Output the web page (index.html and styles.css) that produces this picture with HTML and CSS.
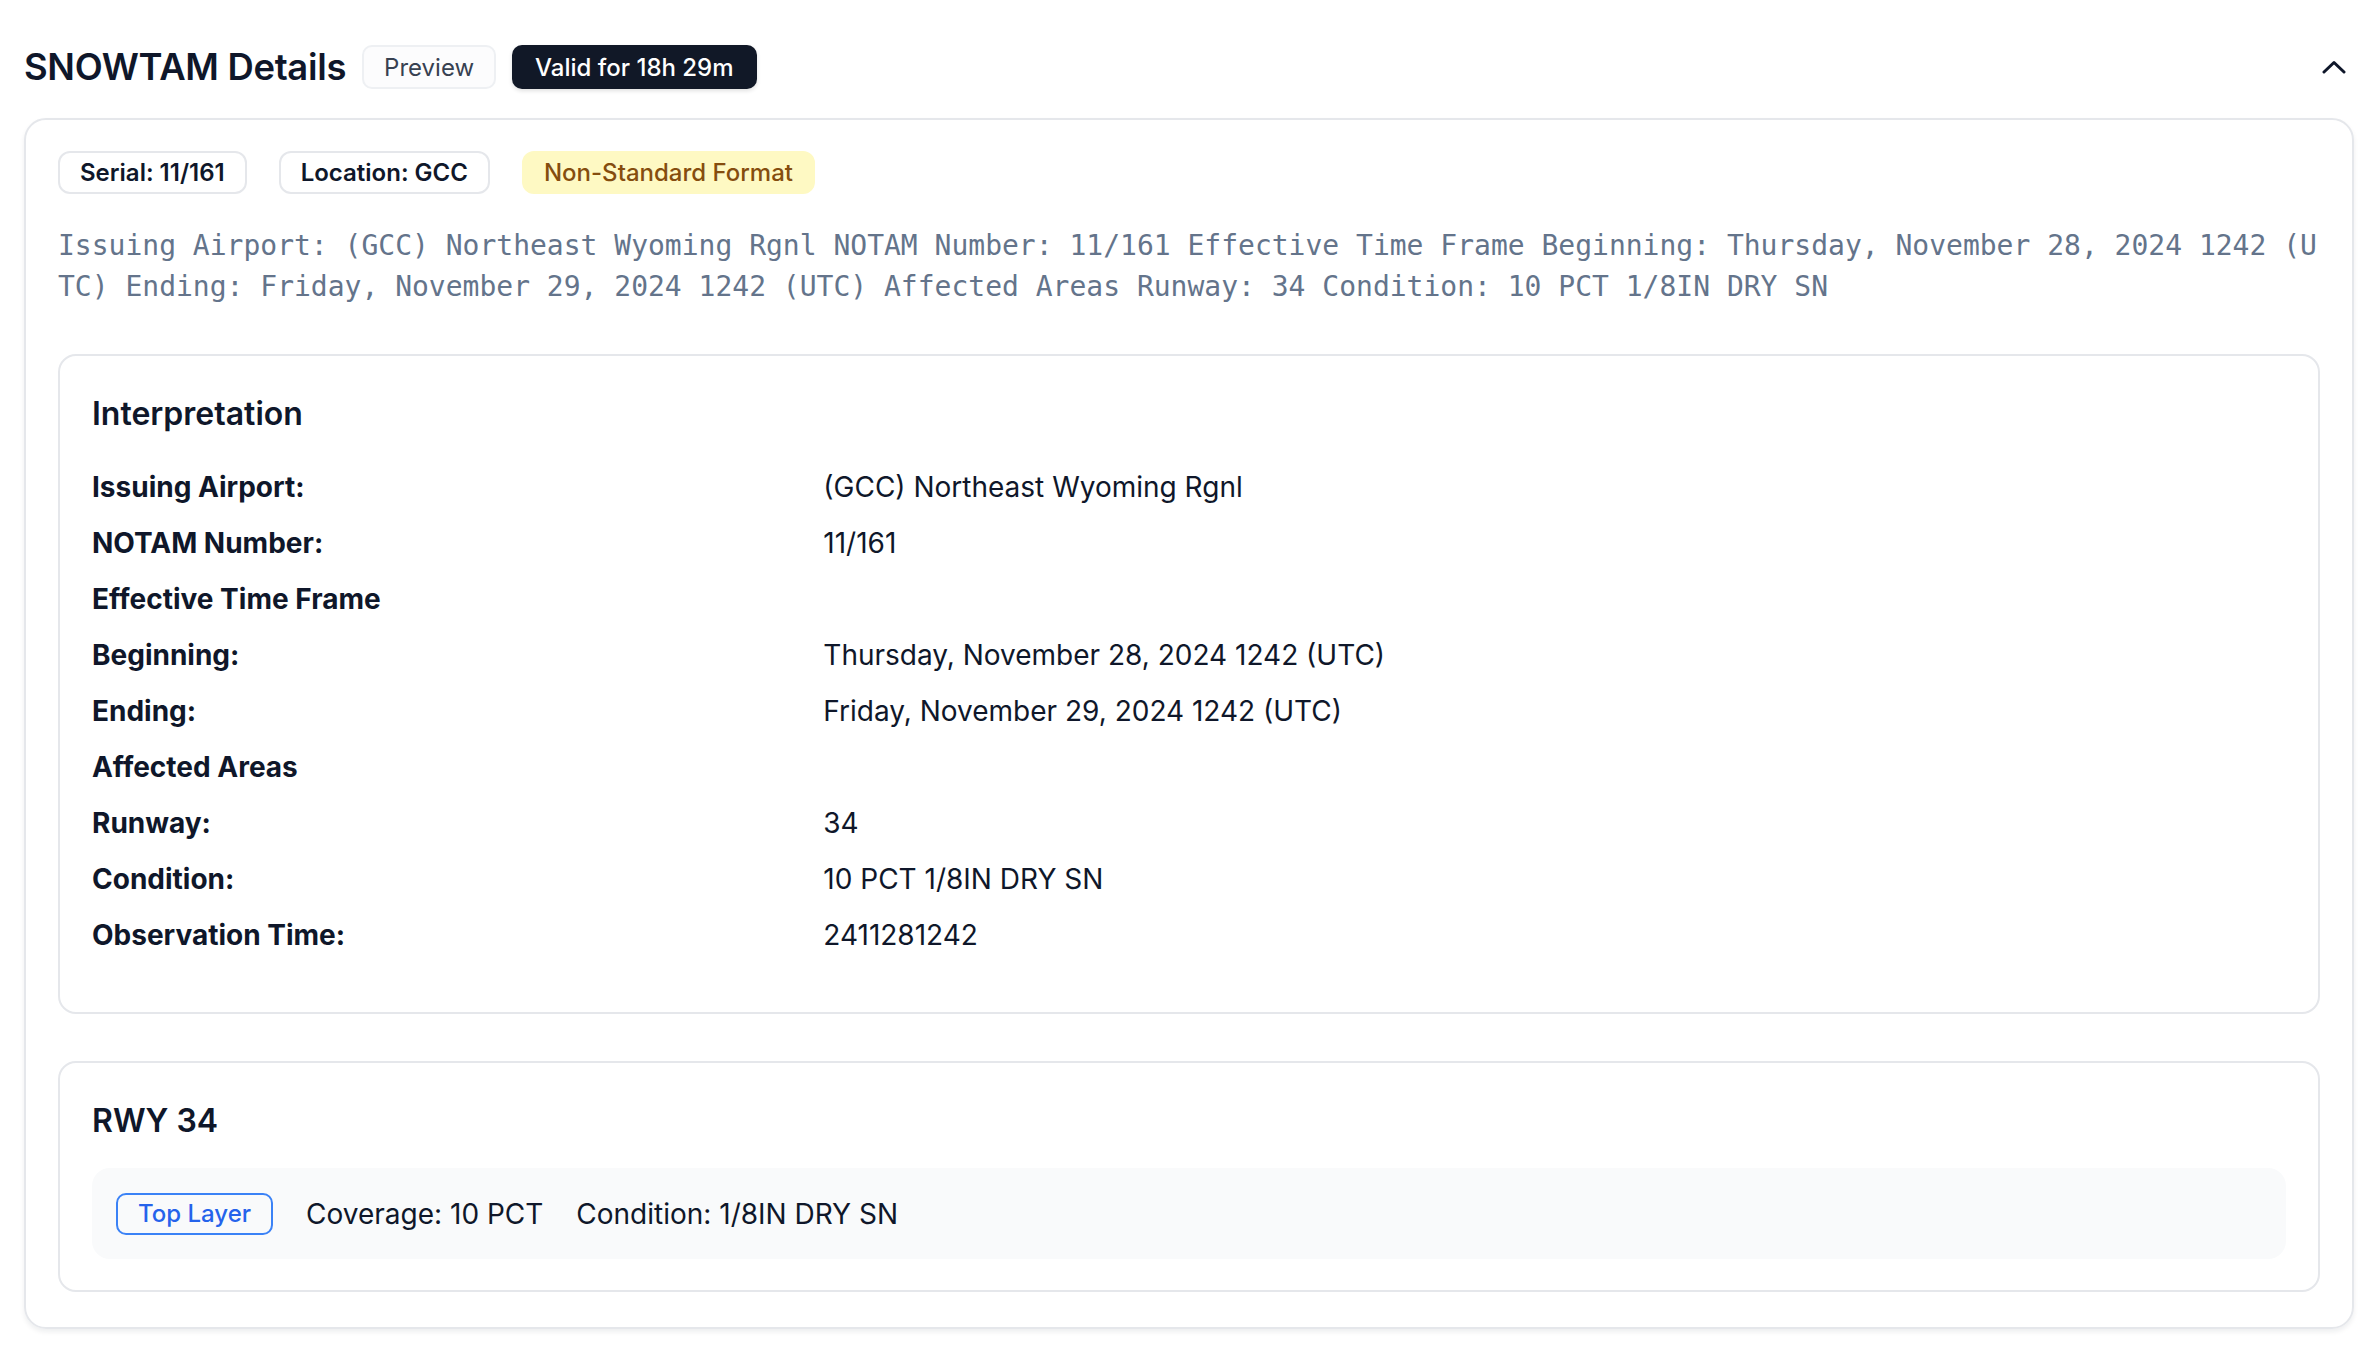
FILE: index.html
```html
<!DOCTYPE html>
<html lang="en">
<head>
<meta charset="utf-8">
<title>SNOWTAM Details</title>
<link rel="stylesheet" href="styles.css">
</head>
<body>
<div class="page">
  <header class="header">
    <div class="header-left">
      <h1 class="title">SNOWTAM Details</h1>
      <span class="pill pill-light">Preview</span>
      <span class="pill pill-dark">Valid for 18h 29m</span>
    </div>
    <button class="toggle" aria-label="Collapse">
      <svg width="24" height="14" viewBox="0 0 24 14" fill="none"><polyline points="2,12 12,2.5 22,12" stroke="#0f172a" stroke-width="3" stroke-linecap="round" stroke-linejoin="round"/></svg>
    </button>
  </header>

  <section class="card">
    <div class="tags">
      <span class="tag">Serial: 11/161</span>
      <span class="tag">Location: GCC</span>
      <span class="tag tag-warn">Non-Standard Format</span>
    </div>

    <p class="raw">Issuing Airport: (GCC) Northeast Wyoming Rgnl NOTAM Number: 11/161 Effective Time Frame Beginning: Thursday, November 28, 2024 1242 (UTC) Ending: Friday, November 29, 2024 1242 (UTC) Affected Areas Runway: 34 Condition: 10 PCT 1/8IN DRY SN</p>

    <div class="panel">
      <h2 class="panel-title">Interpretation</h2>
      <div class="grid">
        <div class="label">Issuing Airport:</div><div class="value">(GCC) Northeast Wyoming Rgnl</div>
        <div class="label">NOTAM Number:</div><div class="value">11/161</div>
        <div class="label">Effective Time Frame</div><div class="value"></div>
        <div class="label">Beginning:</div><div class="value">Thursday, November 28, 2024 1242 (UTC)</div>
        <div class="label">Ending:</div><div class="value">Friday, November 29, 2024 1242 (UTC)</div>
        <div class="label">Affected Areas</div><div class="value"></div>
        <div class="label">Runway:</div><div class="value">34</div>
        <div class="label">Condition:</div><div class="value">10 PCT 1/8IN DRY SN</div>
        <div class="label">Observation Time:</div><div class="value">2411281242</div>
      </div>
    </div>

    <div class="panel panel-rwy">
      <h2 class="panel-title">RWY 34</h2>
      <div class="layer">
        <span class="layer-tag">Top Layer</span>
        <span class="layer-text">Coverage: 10 PCT</span>
        <span class="layer-text">Condition: 1/8IN DRY SN</span>
      </div>
    </div>
  </section>
</div>
</body>
</html>
```

FILE: styles.css
```css
* { box-sizing: border-box; }
html, body { margin: 0; padding: 0; background: #ffffff; }
body {
  font-family: Inter, "Noto Sans", "Liberation Sans", sans-serif;
  color: #0f172a;
}
.page {
  padding: 45px 20px 24px 24px;
}
.header {
  display: flex;
  align-items: center;
  justify-content: space-between;
  height: 44px;
}
.header-left {
  display: flex;
  align-items: center;
  gap: 16px;
}
.title {
  margin: 0;
  font-size: 36.4px;
  font-weight: 600;
  letter-spacing: -0.3px;
  color: #0f172a;
}
.pill {
  display: inline-flex;
  align-items: center;
  height: 44px;
  padding: 0 21px;
  border-radius: 10px;
  font-size: 24px;
}
.pill-light {
  border: 2px solid #eef0f3;
  background: #fcfcfd;
  color: #374151;
  font-weight: 400;
  padding: 0 20px;
}
.pill-dark {
  background: #111827;
  color: #ffffff;
  font-weight: 500;
  padding: 0 23px;
  box-shadow: 0 2px 4px rgba(0,0,0,0.12);
}
.toggle {
  border: 0;
  background: none;
  padding: 0;
  margin-right: 8px;
  display: flex;
  align-items: center;
}
.card {
  margin-top: 29px;
  border: 2px solid #e5e7eb;
  border-radius: 22px;
  padding: 31px 32px 35px 32px;
  box-shadow: 0 3px 5px rgba(15,23,42,0.07);
}
.tags {
  display: flex;
  gap: 32px;
}
.tag {
  display: inline-flex;
  align-items: center;
  height: 43px;
  padding: 0 20px;
  border: 2px solid #e5e7eb;
  border-radius: 12px;
  font-size: 24px;
  font-weight: 600;
  color: #0f172a;
}
.tag-warn {
  border-color: #fef9c3;
  background: #fef9c3;
  color: #854d0e;
  font-weight: 500;
}
.raw {
  margin: 31px 0 0 0;
  font-family: "DejaVu Sans Mono", "Liberation Mono", monospace;
  font-size: 28px;
  line-height: 41px;
  color: #64748b;
  word-break: break-all;
}
.panel {
  margin-top: 47px;
  border: 2px solid #e5e7eb;
  border-radius: 18px;
  padding: 35px 32px 49px 32px;
}
.panel-title {
  margin: 0;
  font-size: 32px;
  font-weight: 600;
  line-height: 46px;
  color: #0f172a;
}
.grid {
  margin-top: 22px;
  display: grid;
  grid-template-columns: 1fr 2fr;
  grid-auto-rows: 56px;
  align-items: center;
  font-size: 28px;
}
.label {
  font-weight: 700;
  color: #0f172a;
}
.value {
  font-weight: 400;
  color: #0f172a;
}
.panel-rwy {
  margin-top: 47px;
  padding-bottom: 31px;
}
.layer {
  margin-top: 24px;
  display: flex;
  align-items: center;
  gap: 33px;
  height: 91px;
  padding: 0 24px;
  background: #f9fafb;
  border-radius: 18px;
}
.layer-tag {
  display: inline-flex;
  align-items: center;
  height: 42px;
  padding: 0 20px;
  border: 2px solid #3b82f6;
  border-radius: 10px;
  color: #2563eb;
  font-size: 24px;
  font-weight: 500;
}
.layer-text {
  font-size: 28px;
  color: #0f172a;
}
```
